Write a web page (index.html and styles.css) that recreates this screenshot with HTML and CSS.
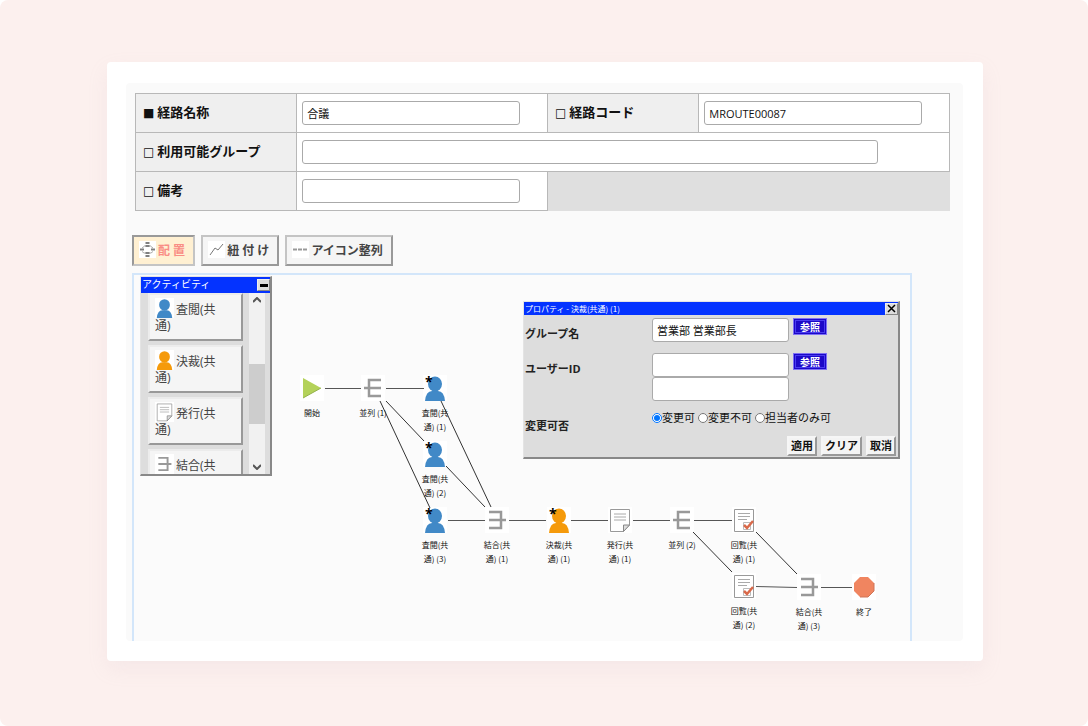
FILE: index.html
```html
<!DOCTYPE html>
<html lang="ja">
<head>
<meta charset="utf-8">
<title>経路設定</title>
<link rel="stylesheet" href="styles.css">
</head>
<body>
<svg class="defs" aria-hidden="true">
  <symbol id="person" viewBox="0 0 24 26"><path d="M2 26Q3 16 9 16H15Q21 16 22 26Z"/><ellipse cx="12" cy="9" rx="7" ry="7.500"/></symbol>
  <symbol id="doc" viewBox="0 0 24 26"><path d="M2.500 2.500H21.500V18L15.500 24.500H2.500Z" fill="#fff" stroke="#999"/><path d="M15.500 24.500V18H21.500Z" fill="#ddd" stroke="#888"/><path d="M6 7H18M6 10H18M6 13H18" stroke="#aaa" fill="none"/></symbol>
  <symbol id="check" viewBox="0 0 24 26"><path d="M2.500 2.500H21.500V24.500H2.500Z" fill="#fff" stroke="#999"/><path d="M6 6.500H18M6 9.500H18M6 12.500H15" stroke="#aaa" fill="none"/><path d="M11.500 15.500H18.500V22.500H11.500Z" fill="#fff" stroke="#bbb"/><path d="M12 18L15 21L21 14" stroke="#d9694a" stroke-width="2.500" fill="none"/></symbol>
  <symbol id="split" viewBox="0 0 24 26"><path d="M20 5H8V21H20M3 13H20" stroke="#999" stroke-width="2.500" fill="none"/></symbol>
  <symbol id="join" viewBox="0 0 24 26"><path d="M4 5H16V21H4M4 13H21" stroke="#999" stroke-width="2.500" fill="none"/></symbol>
  <symbol id="start" viewBox="0 0 24 26"><path d="M3 3L21 13L3 23Z" fill="#b4d25a"/><path d="M3 23L21 13" stroke="#94b24c" fill="none"/></symbol>
  <symbol id="end" viewBox="0 0 24 26"><path d="M8 3H16L22 9V17L16 23H8L2 17V9Z" fill="#f08560"/><path d="M22 9V17L16 23H8" stroke="#cf7558" fill="none"/></symbol>
</svg>
<main class="card">
  <div class="panel">
    <table class="info">
      <colgroup><col class="c-head"><col class="c-body"><col class="c-head2"><col class="c-body"></colgroup>
      <tr>
        <th><span class="mark">■</span> <label for="name">経路名称</label></th>
        <td><input class="field" id="name" type="text" value="合議"></td>
        <th><span class="mark">□</span> <label for="code">経路コード</label></th>
        <td><input class="field" id="code" type="text" value="MROUTE00087"></td>
      </tr>
      <tr>
        <th><span class="mark">□</span> <label for="groups">利用可能グループ</label></th>
        <td colspan="3"><input class="field wide" id="groups" type="text"></td>
      </tr>
      <tr>
        <th><span class="mark">□</span> <label for="note">備考</label></th>
        <td><input class="field" id="note" type="text"></td>
        <td class="blank" colspan="2"></td>
      </tr>
    </table>

    <div class="toolbar">
      <button class="tool active" type="button"><svg width="17" height="17" viewBox="0 0 17 17"><path fill="#fff" d="M0 0H17V17H0Z"/><path d="M5 5.500L3 7M12 5.500L14 7M3 10.500L5 12M14 10.500L12 12M5 5H12M5 12H12" stroke="#aaa" fill="none"/><path d="M6.500 2H10.500M6.500 5H10.500M1 8.500H5M12 8.500H16M6.500 12H10.500M6.500 15H10.500" stroke="#808080" stroke-width="2"/></svg>配 置</button>
      <button class="tool" type="button"><svg width="17" height="17" viewBox="0 0 17 17"><path fill="#fff" d="M0 0H17V17H0Z"/><path d="M2 14L7 7L10 9L15 3" stroke="#777" fill="none"/></svg>紐 付 け</button>
      <button class="tool" type="button"><svg width="17" height="17" viewBox="0 0 17 17"><path fill="#fff" d="M0 0H17V17H0Z"/><path d="M1 8.500H5M6 8.500H10M11 8.500H15" stroke="#999" stroke-width="2"/></svg>アイコン整列</button>
    </div>

    <div class="canvas">
      <div class="node n-start"><svg><use href="#start"/></svg><span>開始</span></div>
      <div class="node n-split1"><svg><use href="#split"/></svg><span>並列 (1)</span></div>
      <div class="node person n-rev1"><b>*</b><svg><use href="#person"/></svg><span>査閲(共<br>通) (1)</span></div>
      <div class="node person n-rev2"><b>*</b><svg><use href="#person"/></svg><span>査閲(共<br>通) (2)</span></div>
      <div class="node person n-rev3"><b>*</b><svg><use href="#person"/></svg><span>査閲(共<br>通) (3)</span></div>
      <div class="node n-join1"><svg><use href="#join"/></svg><span>結合(共<br>通) (1)</span></div>
      <div class="node approver n-app"><b>*</b><svg><use href="#person"/></svg><span>決裁(共<br>通) (1)</span></div>
      <div class="node n-issue"><svg><use href="#doc"/></svg><span>発行(共<br>通) (1)</span></div>
      <div class="node n-split2"><svg><use href="#split"/></svg><span>並列 (2)</span></div>
      <div class="node n-circ1"><svg><use href="#check"/></svg><span>回覧(共<br>通) (1)</span></div>
      <div class="node n-circ2"><svg><use href="#check"/></svg><span>回覧(共<br>通) (2)</span></div>
      <div class="node n-join3"><svg><use href="#join"/></svg><span>結合(共<br>通) (3)</span></div>
      <div class="node n-end"><svg><use href="#end"/></svg><span>終了</span></div>
      <svg class="links" aria-hidden="true">
        <path class="flat" d="M191 113.500H227M252 113.500H290M314 245.500H351M375 245.500H412M437 245.500H474M499 245.500H536M560 245.500H598M622 311.500L663 312.500M687 312.500H718"/>
        <path d="M252 126L290 166M246 126L296 233M307 126L357 232M312 191L351 232M559 257L598 297M622 257L663 299"/>
      </svg>

      <section class="window palette">
        <header class="title"><span>アクティビティ</span><button class="min" type="button" aria-label="最小化"><i></i></button></header>
        <div class="pal-body">
          <div class="pal-list">
            <button class="item blue" type="button"><span class="row"><svg><use href="#person"/></svg>査閲(共</span>通)</button>
            <button class="item orange" type="button"><span class="row"><svg><use href="#person"/></svg>決裁(共</span>通)</button>
            <button class="item" type="button"><span class="row"><svg><use href="#doc"/></svg>発行(共</span>通)</button>
            <button class="item" type="button"><span class="row"><svg><use href="#join"/></svg>結合(共</span></button>
          </div>
          <div class="scroll">
            <svg width="8" height="6" viewBox="0 0 8 6"><path d="M0 5L4 1L8 5" fill="none" stroke="#555" stroke-width="2"/></svg>
            <i class="thumb"></i>
            <svg width="8" height="6" viewBox="0 0 8 6"><path d="M0 1L4 5L8 1" fill="none" stroke="#555" stroke-width="2"/></svg>
          </div>
        </div>
      </section>

      <section class="window props">
        <header class="title"><span>プロパティ - 決裁(共通) (1)</span><button class="min" type="button" aria-label="閉じる"><svg width="9" height="9" viewBox="0 0 9 9"><path d="M1 1L8 8M8 1L1 8" stroke="#000" stroke-width="1.500"/></svg></button></header>
        <form class="props-body">
          <div class="line">
            <label class="cap" for="group">グループ名</label>
            <input class="field" id="group" type="text" value="営業部 営業部長">
            <button class="ref" type="button">参照</button>
          </div>
          <div class="line tall">
            <label class="cap" for="user">ユーザーID</label>
            <div class="stack"><input class="field" id="user" type="text"><input class="field" type="text" aria-label="ユーザー名"></div>
            <button class="ref" type="button">参照</button>
          </div>
          <div class="line last">
            <span class="cap" id="chg">変更可否</span>
            <div class="radios" role="radiogroup" aria-labelledby="chg">
              <label><input type="radio" name="chg" checked>変更可</label>
              <label><input type="radio" name="chg">変更不可</label>
              <label><input type="radio" name="chg">担当者のみ可</label>
            </div>
          </div>
          <div class="actions"><button type="button">適用</button><button type="button">クリア</button><button type="button">取消</button></div>
        </form>
      </section>
    </div>
  </div>
</main>
</body>
</html>
```
FILE: styles.css
```css
* { box-sizing: border-box; }
html { background: #fff; overflow: hidden; }
body {
  margin: 0;
  min-height: 100vh;
  padding: 62px 105px 65px 107px;
  background: #fcf0ee;
  border-radius: 8px;
  font-family: "Open Sans", "Noto Sans CJK JP", sans-serif;
  font-size: 12px;
  color: #111;
}
button, input { font-family: inherit; color: inherit; margin: 0; }
.defs { position: absolute; width: 0; height: 0; }
.card {
  background: #fff;
  border-radius: 4px;
  padding: 21px 20px 20px 19px;
  box-shadow: 0 8px 20px rgba(200, 170, 190, 0.12);
}
.panel { background: #fafafa; padding: 10px 13px 0 6px; border-radius: 4px; }

.info {
  width: calc(100% - 3px);
  margin-left: 3px;
  border-collapse: collapse;
  table-layout: fixed;
}
.c-head { width: 19.8%; }
.c-body { width: 30.8%; }
.c-head2 { width: 18.6%; }
.info th, .info td {
  height: 39px;
  padding: 0 0 0 5px;
  border: 1px solid #b8b8b8;
  text-align: left;
  background: #fff;
}
.info th {
  padding: 0 0 3px 7px;
  background: #efefef;
  font-size: 13px;
  font-weight: 700;
  font-family: "Noto Sans CJK JP", sans-serif;
}
.mark { font-family: "DejaVu Sans", sans-serif; font-size: 12px; font-weight: 400; }
.info td.blank { background: #dfdfdf; border-color: #dfdfdf; border-left-color: #b8b8b8; border-top-color: #b8b8b8; }
.field {
  display: block;
  height: 24px;
  width: 89%;
  padding: 0 4px;
  border: 1px solid #aaa;
  border-radius: 3px;
  background: #fff;
  font-size: 11px;
}
.toolbar { display: flex; gap: 6px; margin-top: 24px; }
.tool {
  display: flex;
  align-items: center;
  gap: 2px;
  height: 31px;
  padding: 0 8px 2px 5px;
  border: 2px solid;
  border-color: #c4c4c4 #999 #999 #c4c4c4;
  background: #f5f5f5;
  color: #444;
  font-size: 12px;
  font-weight: 700;
}
.tool.active { border-color: #999 #c4c4c4 #c4c4c4 #999; background: #fff0d2; color: #f98d85; }

.canvas {
  position: relative;
  height: 368px;
  margin: 7px 38px 0 0;
  border: 2px solid #d3e6fa;
  border-bottom: 0;
  overflow: hidden;
  background: #fbfbfb;
}
.links { position: absolute; top: 0; left: 0; width: 100%; height: 100%; pointer-events: none; }
.links path { stroke: #333; fill: none; }
.links .flat { stroke: #555; }

.node {
  position: absolute;
  display: flex;
  flex-direction: column;
  align-items: center;
  gap: 5px;
  width: 56px;
  font-family: "Noto Sans CJK JP", sans-serif;
  font-size: 8px;
  line-height: 14px;
  text-align: center;
}
.node svg { width: 24px; height: 26px; background: #fff; }
.node b { position: absolute; top: 0; left: 18px; font-family: "Open Sans", sans-serif; font-size: 14px; line-height: 14px; color: #000; }
.person { fill: #4189c7; }
.approver { fill: #f59a0b; }
.n-start { left: 150px; top: 100px; }
.n-split1 { left: 211px; top: 100px; }
.n-rev1 { left: 273px; top: 100px; }
.n-rev2 { left: 273px; top: 166px; }
.n-rev3 { left: 273px; top: 232px; }
.n-join1 { left: 335px; top: 232px; }
.n-app { left: 397px; top: 232px; }
.n-issue { left: 458px; top: 232px; }
.n-split2 { left: 520px; top: 232px; }
.n-circ1 { left: 582px; top: 232px; }
.n-circ2 { left: 582px; top: 298px; }
.n-join3 { left: 647px; top: 299px; }
.n-end { left: 702px; top: 299px; }

.window {
  position: absolute;
  background: #ddd;
  border: 1px solid #e4e4e4;
  border-right: 2px solid #888;
  border-bottom: 2px solid #888;
}
.title {
  display: flex;
  justify-content: space-between;
  align-items: center;
  background: #0433ff;
  color: #fff;
  font-family: "Noto Sans CJK JP", sans-serif;
}
.min {
  display: flex;
  align-items: center;
  justify-content: center;
  width: 13px;
  height: 12px;
  padding: 0;
  border: 1px solid;
  border-color: #eee #888 #888 #eee;
  background: #ddd;
}
.min i { width: 8px; height: 3px; background: #000; }

.palette { left: 6px; top: 1px; width: 132px; height: 200px; display: flex; flex-direction: column; }
.palette .title { height: 16px; padding-left: 1px; font-size: 10px; line-height: 14px; align-items: flex-start; }
.palette .min { margin-top: 2px; }
.pal-body { flex: 1; min-height: 0; display: flex; justify-content: space-between; padding: 0 5px 0 7px; }
.pal-list { overflow: hidden; display: flex; flex-direction: column; gap: 4px; }
.item {
  flex: none;
  display: flex;
  flex-direction: column;
  align-items: flex-start;
  width: 95px;
  height: 48px;
  padding: 7px 6px 0 5px;
  border: 2px solid;
  border-color: #ececec #999 #999 #ececec;
  background: #f5f5f5;
  color: #444;
  font-size: 12px;
  line-height: 16px;
  text-align: left;
}
.row { display: flex; align-items: center; gap: 2px; height: 16px; }
.row svg { width: 19px; height: 20px; margin-bottom: 4px; flex: none; background: #fff; }
.blue svg { fill: #4189c7; }
.orange svg { fill: #f59a0b; }
.scroll { width: 16px; display: flex; flex-direction: column; align-items: center; justify-content: space-between; padding: 4px 0; background: #f1f1f1; }
.thumb { width: 16px; height: 60px; margin-top: 21px; background: #cdcdcd; }

.props { left: 389px; top: 26px; width: 377px; }
.props .title { height: 13px; font-size: 8px; line-height: 13px; padding-left: 1px; }
.props-body { padding: 3px 2px 1px 1px; }
.line { display: flex; align-items: flex-start; height: 35px; }
.line.tall { height: 56px; }
.line.last { height: 27px; }
.cap { width: 127px; font-size: 11px; font-weight: 700; line-height: 32px; color: #222; }
.line.last .cap { line-height: 34px; }
.line .field { width: 137px; }
.ref {
  width: 34px;
  height: 17px;
  margin-left: 4px;
  padding: 0;
  border: 1px solid #7d70f5;
  outline: 1px solid #4a3cf0;
  outline-offset: -3px;
  background: #1c08c8;
  color: #fff;
  font-size: 10px;
  font-weight: 700;
  line-height: 12px;
}
.radios { display: flex; gap: 3px; font-size: 11px; line-height: 18px; }
.radios label { display: flex; align-items: center; white-space: nowrap; }
.radios input { width: 10px; height: 10px; }
.actions { display: flex; justify-content: flex-end; gap: 4px; }
.actions button {
  height: 20px;
  padding: 0 2px 1px;
  border: 2px solid;
  border-color: #f6f6f6 #999 #999 #f6f6f6;
  background: #f4f4f4;
  font-size: 11px;
  font-weight: 700;
  line-height: 15px;
}
```
